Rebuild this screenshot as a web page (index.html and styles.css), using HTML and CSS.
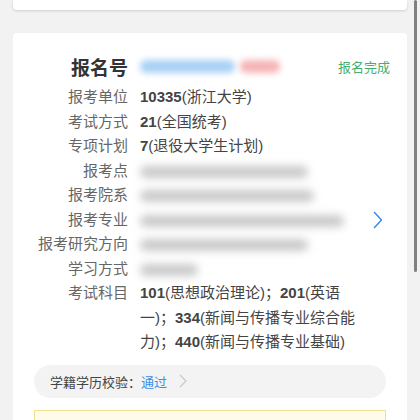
FILE: index.html
```html
<!DOCTYPE html>
<html lang="zh">
<head>
    <meta charset="UTF-8">
    <meta name="viewport" content="width=device-width, initial-scale=1.0">
    <title>报名信息</title>
    <link rel="stylesheet" href="styles.css">
</head>
<body>

<div class="card card-top"></div>

<div class="card">
    <div class="head">
        <div class="title">报名号</div>
        <div class="head-value">
            <span class="blur blur-blue"></span>
            <span class="blur blur-red"></span>
        </div>
        <div class="status">报名完成</div>
    </div>

    <div class="info">
        <div class="rows">
            <div class="label">报考单位</div>
            <div class="value"><b>10335</b>(浙江大学)</div>
            <div class="label">考试方式</div>
            <div class="value"><b>21</b>(全国统考)</div>
            <div class="label">专项计划</div>
            <div class="value"><b>7</b>(退役大学生计划)</div>
            <div class="label">报考点</div>
            <div class="value"><span class="blur blur-gray" style="width: 168px"></span></div>
            <div class="label">报考院系</div>
            <div class="value"><span class="blur blur-gray" style="width: 174px"></span></div>
            <div class="label">报考专业</div>
            <div class="value"><span class="blur blur-gray" style="width: 204px"></span></div>
            <div class="label">报考研究方向</div>
            <div class="value"><span class="blur blur-gray" style="width: 168px"></span></div>
            <div class="label">学习方式</div>
            <div class="value"><span class="blur blur-gray" style="width: 58px"></span></div>
            <div class="label">考试科目</div>
            <div class="value"><b>101</b>(思想政治理论)；<b>201</b>(英语一)；<b>334</b>(新闻与传播专业综合能力)；<b>440</b>(新闻与传播专业基础)</div>
        </div>
        <svg class="arrow" width="10" height="18" viewBox="0 0 10 18">
            <path d="M1.5 1.5 L8.5 9 L1.5 16.5" fill="none" stroke="#3a8ee6" stroke-width="1.6" stroke-linecap="round" stroke-linejoin="round"/>
        </svg>
    </div>

    <div class="check">
        <span>学籍学历校验：</span>
        <span class="pass">通过</span>
        <svg class="check-arrow" width="8" height="14" viewBox="0 0 8 14">
            <path d="M1 1 L7 7 L1 13" fill="none" stroke="#c8c8c8" stroke-width="1.2"/>
        </svg>
    </div>

    <div class="notice"></div>
</div>

<div class="scrollbar"></div>

</body>
</html>
```

FILE: styles.css
```css
body {
    margin: 0;
    background: #f2f2f2;
    font-family: "Liberation Sans", "Noto Sans CJK SC", sans-serif;
    color: #444;
    height: 420px;
    overflow: hidden;
}

.card {
    box-sizing: border-box;
    background: #fff;
    margin: 0 13px;
    padding: 20px 21px 0;
    border-radius: 4px 4px 0 0;
    height: 387px;
    overflow: hidden;
}

.card-top {
    height: 10px;
    padding: 0;
    margin-bottom: 23px;
    border-radius: 0 0 4px 4px;
    box-shadow: 0 1px 3px rgba(0, 0, 0, 0.15);
}

.head {
    display: grid;
    grid-template-columns: 94px 1fr auto;
    column-gap: 12px;
    align-items: center;
    height: 26px;
    margin-bottom: 6px;
}

.title {
    text-align: right;
    font-size: 19px;
    font-weight: bold;
    color: #333;
}

.head-value {
    display: flex;
    gap: 5px;
}

.status {
    font-size: 13px;
    color: #44b06f;
    margin-right: -4px;
}

.blur {
    display: inline-block;
    height: 13px;
    border-radius: 6px;
    filter: blur(3px);
    vertical-align: middle;
}

.blur-blue {
    width: 95px;
    background: #a9d1f6;
}

.blur-red {
    width: 40px;
    background: #f5b4b7;
}

.blur-gray {
    height: 12px;
    background: #c9c9c9;
    filter: blur(4px);
}

.info {
    display: flex;
    align-items: center;
    justify-content: space-between;
}

.rows {
    display: grid;
    grid-template-columns: 94px 225px;
    column-gap: 12px;
    font-size: 15px;
    line-height: 24.5px;
}

.label {
    text-align: right;
    color: #666;
}

.value b {
    color: #444;
}

.arrow {
    margin-right: 3px;
}

.check {
    display: flex;
    align-items: center;
    margin-top: 10px;
    height: 33px;
    padding-left: 16px;
    background: #f3f3f3;
    border-radius: 17px;
    font-size: 13px;
    color: #444;
}

.pass {
    color: #3a8ee6;
}

.check-arrow {
    margin-left: 12px;
}

.notice {
    margin-top: 12px;
    height: 30px;
    border: 1px solid #f3df90;
    background: #fffbea;
}

.scrollbar {
    position: absolute;
    top: 0;
    right: 3px;
    width: 3px;
    height: 272px;
    background: #808080;
    border-radius: 2px;
}
```
